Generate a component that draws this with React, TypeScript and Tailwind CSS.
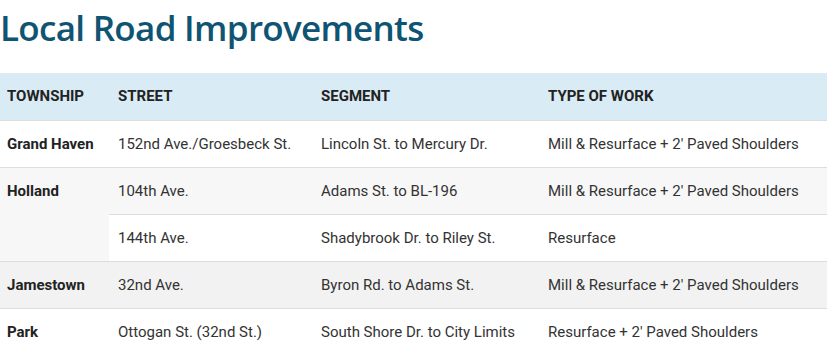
const rows = [
  { town: "Grand Haven", street: "152nd Ave./Groesbeck St.", segment: "Lincoln St. to Mercury Dr.", work: "Mill & Resurface + 2' Paved Shoulders", bg: "bg-white" },
];

export default function App() {
  const cell = "h-[47px] px-[7px] align-middle leading-[18px] border-b border-[#dddddd]";
  const street = "h-[47px] pl-[9px] pr-[7px] align-middle leading-[18px] border-b border-[#dddddd]";
  return (
    <div className="w-[827px] h-[361px] overflow-hidden bg-white" style={{ fontFamily: "Roboto, 'Liberation Sans', sans-serif" }}>
      <h1
        className="m-0 pt-[6px] text-[35px] leading-[44px] font-semibold text-[#0f5472] tracking-[-0.7px]"
        style={{ fontFamily: "'Open Sans', Lato, sans-serif" }}
      >
        Local Road Improvements
      </h1>
      <table className="mt-[23px] w-full border-collapse text-[15px] text-[#333333]">
        <colgroup>
          <col className="w-[109px]" />
          <col className="w-[205px]" />
          <col className="w-[227px]" />
          <col />
        </colgroup>
        <thead>
          <tr className="bg-[#d9ebf5]">
            <th className={`${cell} text-left font-bold uppercase text-[#222]`}>Township</th>
            <th className={`${street} text-left font-bold uppercase text-[#222]`}>Street</th>
            <th className={`${cell} text-left font-bold uppercase text-[#222]`}>Segment</th>
            <th className={`${cell} text-left font-bold uppercase text-[#222]`}>Type of Work</th>
          </tr>
        </thead>
        <tbody>
          {rows.map((r) => (
            <tr key={r.town} className={r.bg}>
              <td className={`${cell} font-bold text-[#222]`}>{r.town}</td>
              <td className={street}>{r.street}</td>
              <td className={cell}>{r.segment}</td>
              <td className={cell}>{r.work}</td>
            </tr>
          ))}
          <tr className="bg-[#f7f7f7]">
            <td rowSpan={2} className={`${cell} align-top pt-[14px] font-bold text-[#222]`}>Holland</td>
            <td className={street}>104th Ave.</td>
            <td className={cell}>Adams St. to BL-196</td>
            <td className={cell}>Mill &amp; Resurface + 2' Paved Shoulders</td>
          </tr>
          <tr className="bg-white">
            <td className={street}>144th Ave.</td>
            <td className={cell}>Shadybrook Dr. to Riley St.</td>
            <td className={cell}>Resurface</td>
          </tr>
          <tr className="bg-[#f2f2f2]">
            <td className={`${cell} font-bold text-[#222]`}>Jamestown</td>
            <td className={street}>32nd Ave.</td>
            <td className={cell}>Byron Rd. to Adams St.</td>
            <td className={cell}>Mill &amp; Resurface + 2' Paved Shoulders</td>
          </tr>
          <tr className="bg-white">
            <td className={`${cell} border-b-0 font-bold text-[#222]`}>Park</td>
            <td className={`${street} border-b-0`}>Ottogan St. (32nd St.)</td>
            <td className={`${cell} border-b-0`}>South Shore Dr. to City Limits</td>
            <td className={`${cell} border-b-0`}>Resurface + 2' Paved Shoulders</td>
          </tr>
        </tbody>
      </table>
    </div>
  );
}
